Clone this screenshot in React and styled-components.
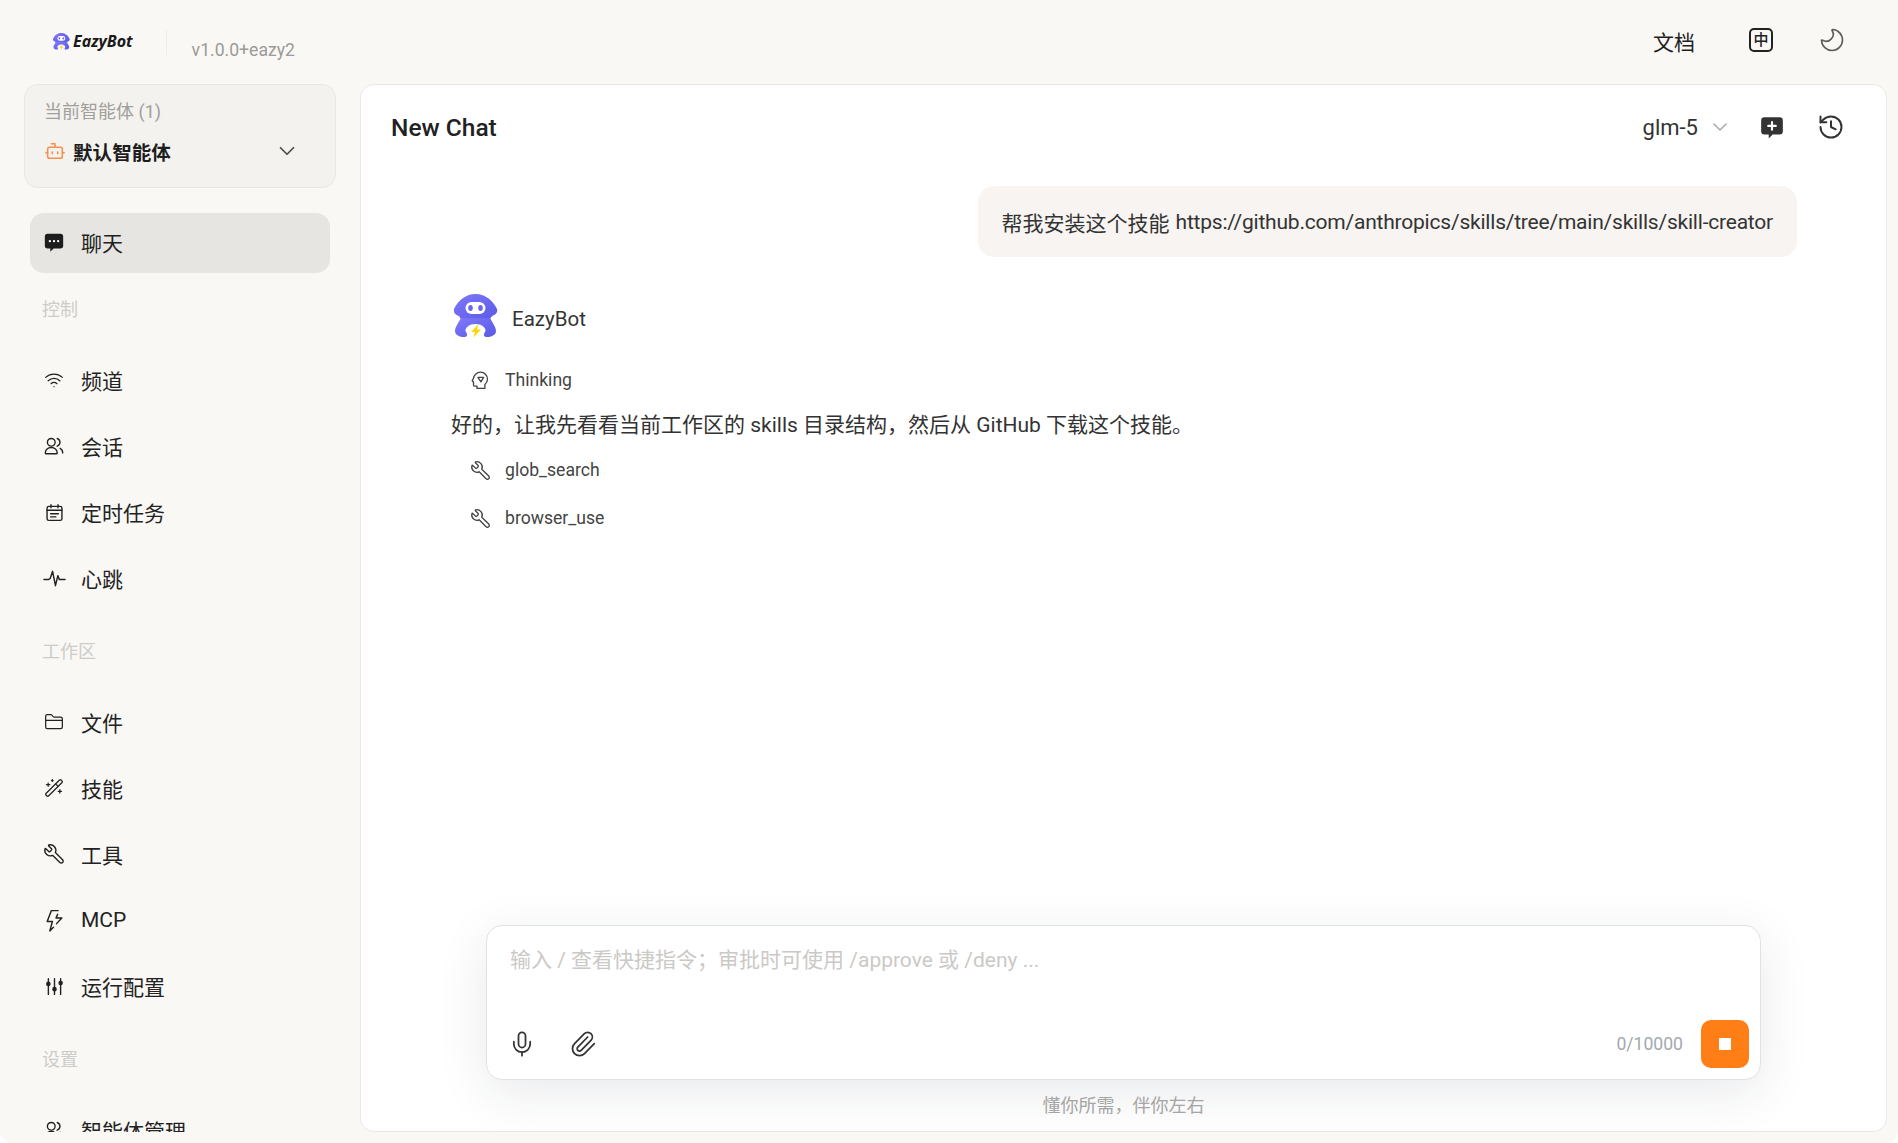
import React, { useId } from 'react';
import styled, { createGlobalStyle } from 'styled-components';
import {
  Bot, ChevronDown, FolderClosed, History, Mic, Moon, Paperclip,
  WandSparkles, Wifi, Wrench,
} from 'lucide-react';

const GlobalStyle = createGlobalStyle`
  html, body { margin: 0; height: 100%; background: #fff; }
  body { font-family: Roboto, "Noto Sans CJK SC", sans-serif; color: #222; overflow: hidden; }
  #root { height: 100%; }
  * { box-sizing: border-box; }
`;

const Page = styled.div`
  height: 100vh;
  display: flex;
  flex-direction: column;
  background: #f9f8f5;
  border-radius: 0 0 12px 12px;
  overflow: hidden;
`;

const TopBar = styled.header`
  flex: 0 0 84px;
  display: flex;
  align-items: flex-start;
  padding: 28px 52px 0 53px;
`;

const Brand = styled.div`
  display: flex;
  align-items: center;
  gap: 3px;
  height: 26px;
`;

const BrandName = styled.span`
  font-family: "Open Sans", sans-serif;
  font-size: 16px;
  font-weight: 700;
  font-style: italic;
  color: #1a1a1a;
`;

const Divider = styled.span`
  width: 1px;
  height: 25px;
  margin: 2px 25px 0 33px;
  background: #eeedea;
`;

const Version = styled.span`
  font-size: 17.6px;
  line-height: 24px;
  margin-top: 10px;
  color: #9b9a98;
`;

const TopActions = styled.div`
  margin-left: auto;
  display: flex;
  align-items: center;
  height: 24px;
`;

const DocsLink = styled.a`
  font-size: 21px;
  line-height: 26px;
  margin-top: 6px;
  margin-right: 54px;
  color: #1f1f1f;
`;

const LangBox = styled.span`
  width: 24px;
  height: 24px;
  margin-right: 45px;
  border: 2px solid #222;
  border-radius: 5px;
  display: flex;
  align-items: center;
  justify-content: center;
  font-size: 15px;
  font-weight: 500;
  line-height: 1;
  color: #222;
`;

const MoonIcon = styled(Moon)`
  transform: scaleX(-1);
  color: #5c5c5c;
`;

const Body = styled.div`
  flex: 1;
  min-height: 0;
  display: flex;
  padding: 0 11px 11px 0;
`;

const Sidebar = styled.aside`
  flex: 0 0 360px;
  overflow: hidden;
`;

const AgentCard = styled.div`
  width: 312px;
  height: 104px;
  margin-left: 24px;
  padding: 11px 19px 0;
  background: #f4f2ef;
  border: 1px solid #e9e7e3;
  border-radius: 14px;
`;

const AgentLabel = styled.div`
  font-size: 18px;
  line-height: 32px;
  color: #a19f9b;
`;

const AgentRow = styled.div`
  display: flex;
  align-items: center;
  height: 32px;
  margin-top: 7px;
  gap: 7px;
  color: #f78f4e;
`;

const AgentName = styled.span`
  flex: 1;
  font-size: 19.6px;
  font-weight: 700;
  color: #1d1d1d;
`;

const AgentChevron = styled(ChevronDown)`
  margin-right: 16px;
  color: #4d4d4d;
`;

const Nav = styled.nav`
  padding: 25px 30px 0;
  display: flex;
  flex-direction: column;
`;

const NavItem = styled.a`
  flex: 0 0 60px;
  height: 60px;
  margin-bottom: 6px;
  padding: 0 0 2px 14px;
  display: flex;
  align-items: center;
  gap: 17px;
  border-radius: 14px;
  font-size: 21px;
  color: #222;
  background: ${(p) => (p.$active ? '#e6e5e1' : 'transparent')};
`;

const NavIcon = styled.span`
  width: 20px;
  height: 20px;
  display: flex;
  align-items: center;
  justify-content: center;
  color: #222;
`;

const MirrorWrench = styled(Wrench)`
  flex: none;
  transform: scaleX(-1);
`;

const SectionLabel = styled.div`
  height: 30px;
  margin: ${(p) => (p.$first ? '16px' : '22px')} 0 26px 12px;
  font-size: 18px;
  line-height: 30px;
  color: #cdccc9;
`;

const Main = styled.main`
  flex: 1;
  min-width: 0;
  display: flex;
  flex-direction: column;
  background: #fff;
  border: 1px solid #e9e8e5;
  border-radius: 14px;
  overflow: hidden;
`;

const ChatHeader = styled.div`
  flex: 0 0 84px;
  display: flex;
  align-items: center;
  padding: 0 41px 0 30px;
`;

const ChatTitle = styled.h1`
  margin: 0;
  font-size: 24.5px;
  font-weight: 500;
  color: #222;
`;

const ModelSelect = styled.div`
  margin-left: auto;
  display: flex;
  align-items: center;
  gap: 10px;
  font-size: 22px;
  color: #333;
`;

const ModelChevron = styled(ChevronDown)`
  color: #a8a8a8;
`;

const HeaderIcons = styled.div`
  display: flex;
  align-items: center;
  gap: 32px;
  margin-left: 27px;
  color: #333;
`;

const Messages = styled.div`
  flex: 1;
  min-height: 0;
  padding: 17px 89px 0 90px;
  display: flex;
  flex-direction: column;
`;

const UserBubble = styled.div`
  align-self: flex-end;
  height: 71px;
  padding: 0 24px;
  display: flex;
  align-items: center;
  gap: 6px;
  background: #f7f4f1;
  border-radius: 16px;
  font-size: 21px;
  color: #333;
`;

const UrlText = styled.span`
  letter-spacing: -0.21px;
`;

const Assistant = styled.div`
  margin-top: 37px;
  display: flex;
  flex-direction: column;
`;

const AssistantHead = styled.div`
  height: 43px;
  padding-left: 3px;
  display: flex;
  align-items: center;
  gap: 14px;
  font-size: 20.5px;
  color: #333;
  margin-bottom: 26px;
`;

const AssistantName = styled.span`
  margin-top: 6px;
`;

const StepRow = styled.div`
  height: 34px;
  padding-left: 19px;
  display: flex;
  align-items: center;
  gap: 14px;
  font-size: 17.6px;
  color: #444;
  & + & { margin-top: 14px; }
`;

const Paragraph = styled.p`
  margin: 12px 0;
  font-size: 21px;
  line-height: 32px;
  color: #333;
`;

const Composer = styled.div`
  flex: 0 0 155px;
  margin: 0 125px;
  padding: 19px 11px 11px 23px;
  display: flex;
  flex-direction: column;
  justify-content: space-between;
  background: #fff;
  border: 1px solid #e2e2e2;
  border-radius: 16px;
  box-shadow: 0 12px 50px rgba(30, 35, 60, 0.1);
`;

const Placeholder = styled.div`
  font-size: 21px;
  line-height: 30px;
  color: #cbc9c6;
`;

const ComposerBar = styled.div`
  display: flex;
  align-items: center;
  margin-left: -6px;
`;

const ComposerTool = styled.span`
  width: 36px;
  height: 36px;
  display: flex;
  align-items: center;
  justify-content: center;
  margin-right: 25px;
  color: #333;
`;

const Counter = styled.span`
  margin-left: auto;
  margin-right: 18px;
  font-size: 17.6px;
  color: #a3a8ad;
`;

const StopButton = styled.button`
  width: 48px;
  height: 48px;
  border: 0;
  border-radius: 10px;
  background: #ff7f16;
  display: flex;
  align-items: center;
  justify-content: center;
`;

const StopSquare = styled.span`
  width: 12px;
  height: 12px;
  background: #fff;
`;

const Tagline = styled.div`
  flex: 0 0 51px;
  padding-bottom: 3px;
  display: flex;
  align-items: center;
  justify-content: center;
  font-size: 18px;
  color: #a5a5a5;
`;

const Logo = ({ size }) => {
  const id = useId();
  return (
    <svg width={size} height={size} viewBox="0 0 44 44" style={{ flex: 'none' }}>
      <defs>
        <linearGradient id={id} x1="0" y1="0" x2="1" y2="1">
          <stop offset="0" stopColor="#7f78fa" />
          <stop offset="1" stopColor="#5a5ae6" />
        </linearGradient>
      </defs>
      <path fill={`url(#${id})`} d="M21.5 0C32 0 39 7 43 15c1 3-1 6-5 7l-2 3H7l-2-3C1 21-1 18 0 15 4 7 11 0 21.5 0Z" />
      <rect x="11.5" y="8" width="20" height="12" rx="6" fill="#fff" />
      <ellipse cx="16.5" cy="14" rx="2.3" ry="3" fill="#6a66f0" />
      <ellipse cx="26.5" cy="14" rx="2.3" ry="3" fill="#6a66f0" />
      <path fill={`url(#${id})`} d="M7 24h29c2 4 6 9 6 13 0 4-5 6-9 6-3 0-4-2-2-5 2-3-2-8-9.500-8S10 35 12 38c2 3 1 5-2 5-4 0-9-2-9-6 0-4 4-9 6-13Z" />
      <path fill="#ffd60a" d="M24.500 30 17 38h4l-1.500 5.500L27 35.500h-4Z" />
    </svg>
  );
};

const Glyph = ({ size = 20, sw = 1.6, children, ...rest }) => (
  <svg width={size} height={size} viewBox="0 0 24 24" fill="none" stroke="currentColor"
    strokeWidth={sw} strokeLinecap="round" strokeLinejoin="round" style={{ flex: 'none' }} {...rest}>
    {children}
  </svg>
);

const ChatFill = () => (
  <Glyph size={22} sw={0}>
    <path fill="#1d1d1d" d="M5 3h14a3 3 0 0 1 3 3v10a3 3 0 0 1-3 3h-7.500L8 22.500V19H5a3 3 0 0 1-3-3V6a3 3 0 0 1 3-3Z" />
    <circle cx="7.500" cy="11" r="1.300" fill="#fff" />
    <circle cx="12" cy="11" r="1.300" fill="#fff" />
    <circle cx="16.500" cy="11" r="1.300" fill="#fff" />
  </Glyph>
);

const ChatPlus = () => (
  <Glyph size={26} sw={0}>
    <path fill="#333" d="M5 3h14a3 3 0 0 1 3 3v10a3 3 0 0 1-3 3h-6.500L9 22.500V19H5a3 3 0 0 1-3-3V6a3 3 0 0 1 3-3Z" />
    <path stroke="#fff" strokeWidth="2" d="M12 7.500v7M8.500 11h7" />
  </Glyph>
);

const PeopleIcon = () => (
  <Glyph size={22} sw={1.5}>
    <circle cx="9" cy="8" r="4.200" />
    <path d="M2.500 19.500c0-3.300 2.900-5.800 6.500-5.800s6.500 2.500 6.500 5.800a1 1 0 0 1-1 1h-11a1 1 0 0 1-1-1Z" />
    <path d="M15.500 3.800c1.900.6 3 2.300 3 4.200s-1.100 3.600-3 4.200M18.700 14.500c1.800 1 2.800 2.800 2.800 5" />
  </Glyph>
);

const CalendarIcon = () => (
  <Glyph size={21}>
    <rect x="3.500" y="5" width="17" height="16" rx="2" />
    <path d="M8 3v3.500M16 3v3.500M3.500 9.500h17M7.500 13.500h9M7.500 17h6" />
  </Glyph>
);

const PulseIcon = () => (
  <Glyph size={23} sw={1.5}>
    <path d="M1 13h5l1.500-1L10 4.500l3 15L15.500 9l1.500 4h6" />
  </Glyph>
);

const BoltIcon = () => (
  <Glyph size={25} sw={1.4}>
    <path d="M15.500 2.500H9L5 13h5l-2.500 9L11 18.500M14 15l5-5.500h-5.500L15 6" />
  </Glyph>
);

const SlidersIcon = () => (
  <Glyph size={21}>
    <path d="M5 3v18M12 3v18M19 3v18" />
    <circle cx="5" cy="9" r="1.800" fill="currentColor" />
    <circle cx="12" cy="15" r="1.800" fill="currentColor" />
    <circle cx="19" cy="8" r="1.800" fill="currentColor" />
  </Glyph>
);

const ThinkIcon = () => (
  <Glyph size={21} sw={1.5}>
    <path d="M8 21v-2.500H5.500a1.500 1.500 0 0 1-1.500-1.500v-3L2.500 12 4 9.500C4.500 5.500 8 2.500 12 2.500c4.500 0 8 3.500 8 8 0 2.800-1.200 4.500-3 6V21Z" />
    <path d="M9 8.500h6.500L12.500 13.500Z" />
  </Glyph>
);

const sections = [
  {
    label: '控制',
    items: [
      { text: '频道', icon: <Wifi size={22} strokeWidth={1.5} /> },
      { text: '会话', icon: <PeopleIcon /> },
      { text: '定时任务', icon: <CalendarIcon /> },
      { text: '心跳', icon: <PulseIcon /> },
    ],
  },
  {
    label: '工作区',
    items: [
      { text: '文件', icon: <FolderClosed size={22} strokeWidth={1.5} /> },
      { text: '技能', icon: <WandSparkles size={22} strokeWidth={1.5} /> },
      { text: '工具', icon: <MirrorWrench size={22} strokeWidth={1.5} /> },
      { text: 'MCP', icon: <BoltIcon /> },
      { text: '运行配置', icon: <SlidersIcon /> },
    ],
  },
  {
    label: '设置',
    items: [{ text: '智能体管理', icon: <PeopleIcon /> }],
  },
];

const App = () => (
  <>
    <GlobalStyle />
    <Page>
      <TopBar>
        <Brand>
          <Logo size={17} />
          <BrandName>EazyBot</BrandName>
        </Brand>
        <Divider />
        <Version>v1.0.0+eazy2</Version>
        <TopActions>
          <DocsLink>文档</DocsLink>
          <LangBox>中</LangBox>
          <MoonIcon size={28} strokeWidth={1.4} />
        </TopActions>
      </TopBar>

      <Body>
        <Sidebar>
          <AgentCard>
            <AgentLabel>当前智能体 (1)</AgentLabel>
            <AgentRow>
              <Bot size={22} strokeWidth={1.7} />
              <AgentName>默认智能体</AgentName>
              <AgentChevron size={26} strokeWidth={1.6} />
            </AgentRow>
          </AgentCard>
          <Nav>
            <NavItem $active>
              <NavIcon><ChatFill /></NavIcon>
              聊天
            </NavItem>
            {sections.map((section, i) => (
              <React.Fragment key={section.label}>
                <SectionLabel $first={i === 0}>{section.label}</SectionLabel>
                {section.items.map((item) => (
                  <NavItem key={item.text}>
                    <NavIcon>{item.icon}</NavIcon>
                    {item.text}
                  </NavItem>
                ))}
              </React.Fragment>
            ))}
          </Nav>
        </Sidebar>

        <Main>
          <ChatHeader>
            <ChatTitle>New Chat</ChatTitle>
            <ModelSelect>
              glm-5
              <ModelChevron size={24} strokeWidth={1.5} />
            </ModelSelect>
            <HeaderIcons>
              <ChatPlus />
              <History size={28} strokeWidth={1.7} />
            </HeaderIcons>
          </ChatHeader>

          <Messages>
            <UserBubble>
              帮我安装这个技能
              <UrlText>https://github.com/anthropics/skills/tree/main/skills/skill-creator</UrlText>
            </UserBubble>
            <Assistant>
              <AssistantHead>
                <Logo size={44} />
                <AssistantName>EazyBot</AssistantName>
              </AssistantHead>
              <StepRow><ThinkIcon />Thinking</StepRow>
              <Paragraph>好的，让我先看看当前工作区的 skills 目录结构，然后从 GitHub 下载这个技能。</Paragraph>
              <StepRow><MirrorWrench size={21} strokeWidth={1.5} />glob_search</StepRow>
              <StepRow><MirrorWrench size={21} strokeWidth={1.5} />browser_use</StepRow>
            </Assistant>
          </Messages>

          <Composer>
            <Placeholder>输入 / 查看快捷指令；审批时可使用 /approve 或 /deny ...</Placeholder>
            <ComposerBar>
              <ComposerTool><Mic size={28} strokeWidth={1.5} /></ComposerTool>
              <ComposerTool><Paperclip size={28} strokeWidth={1.5} /></ComposerTool>
              <Counter>0/10000</Counter>
              <StopButton><StopSquare /></StopButton>
            </ComposerBar>
          </Composer>
          <Tagline>懂你所需，伴你左右</Tagline>
        </Main>
      </Body>
    </Page>
  </>
);

export default App;
